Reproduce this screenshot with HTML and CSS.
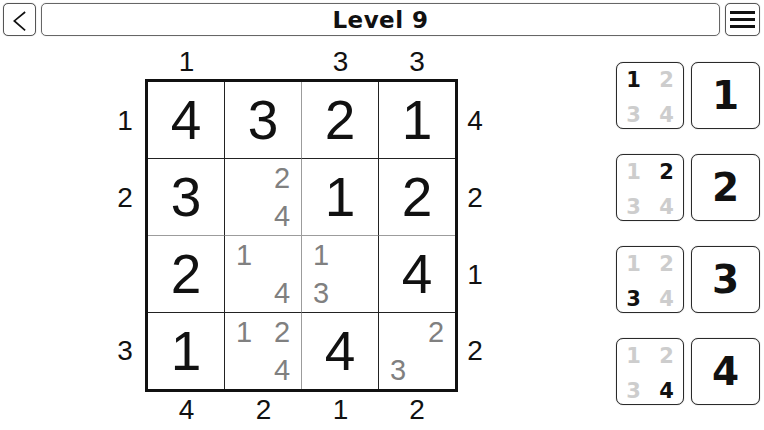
FILE: index.html
```html
<!DOCTYPE html>
<html lang="en">
<head>
<meta charset="utf-8">
<title>Level 9</title>
<link rel="stylesheet" href="styles.css">
</head>
<body>
<header class="topbar">
  <button class="tb-btn back" aria-label="Back">
    <svg width="33" height="33" viewBox="0 0 33 33"><path d="M22.5 8.5 L11 18 L22.5 28" fill="none" stroke="#111" stroke-width="1.8" stroke-linejoin="miter"/></svg>
  </button>
  <div class="title">Level 9</div>
  <button class="tb-btn menu" aria-label="Menu">
    <span class="bar"></span><span class="bar"></span><span class="bar"></span>
  </button>
</header>

<main class="main">
  <section class="board">
    <div class="corner"></div>
    <div class="clues clues-h"><span>1</span><span></span><span>3</span><span>3</span></div>
    <div class="corner"></div>

    <div class="clues clues-v"><span>1</span><span>2</span><span></span><span>3</span></div>
    <div class="grid">
      <div class="cell">4</div>
      <div class="cell">3</div>
      <div class="cell">2</div>
      <div class="cell">1</div>

      <div class="cell">3</div>
      <div class="cell notes"><i></i><i>2</i><i></i><i>4</i></div>
      <div class="cell">1</div>
      <div class="cell">2</div>

      <div class="cell">2</div>
      <div class="cell notes"><i>1</i><i></i><i></i><i>4</i></div>
      <div class="cell notes"><i>1</i><i></i><i>3</i><i></i></div>
      <div class="cell">4</div>

      <div class="cell">1</div>
      <div class="cell notes"><i>1</i><i>2</i><i></i><i>4</i></div>
      <div class="cell">4</div>
      <div class="cell notes"><i></i><i>2</i><i>3</i><i></i></div>
    </div>
    <div class="clues clues-v"><span>4</span><span>2</span><span>1</span><span>2</span></div>

    <div class="corner"></div>
    <div class="clues clues-h"><span>4</span><span>2</span><span>1</span><span>2</span></div>
    <div class="corner"></div>
  </section>

  <section class="keypad">
    <button class="key pencil"><b class="on">1</b><b>2</b><b>3</b><b>4</b></button>
    <button class="key digit">1</button>
    <button class="key pencil"><b>1</b><b class="on">2</b><b>3</b><b>4</b></button>
    <button class="key digit">2</button>
    <button class="key pencil"><b>1</b><b>2</b><b class="on">3</b><b>4</b></button>
    <button class="key digit">3</button>
    <button class="key pencil"><b>1</b><b>2</b><b>3</b><b class="on">4</b></button>
    <button class="key digit">4</button>
  </section>
</main>
</body>
</html>
```

FILE: styles.css
```css
* { box-sizing: border-box; }

html, body {
  margin: 0;
  background: #fff;
  color: #111;
  font-family: "Liberation Sans", Arial, sans-serif;
}

button {
  font: inherit;
  color: inherit;
  background: #fff;
  padding: 0;
  margin: 0;
}

/* ---------- top bar ---------- */
.topbar {
  display: flex;
  gap: 5px;
  padding: 3px 4px 0 3px;
  height: 36px;
}

.tb-btn {
  width: 33px;
  height: 33px;
  border: 1px solid #555;
  border-radius: 5px;
  box-shadow: 0 0 1px #999;
  display: flex;
  align-items: center;
  justify-content: center;
}

.tb-btn.menu {
  width: 35px;
  flex-direction: column;
  gap: 4px;
}

.tb-btn .bar {
  display: block;
  width: 25px;
  height: 3px;
  background: #111;
}

.title {
  flex: 1;
  height: 33px;
  border: 1px solid #666;
  border-radius: 5px;
  box-shadow: 0 0 1px #aaa;
  display: flex;
  align-items: center;
  justify-content: center;
  font-family: "DejaVu Sans", sans-serif;
  font-weight: bold;
  font-size: 23px;
  letter-spacing: 0.5px;
  padding-top: 1px;
}

/* ---------- main area ---------- */
.main {
  display: flex;
  align-items: flex-start;
  padding: 9px 0 0 105px;
}

.board {
  display: grid;
  grid-template-columns: 40px 313px 34px;
  grid-template-rows: 34px 313px 36px;
}

.clues {
  display: grid;
  font-size: 28px;
  line-height: 1;
}

.clues span {
  display: flex;
  align-items: center;
  justify-content: center;
}

.clues-h {
  grid-template-columns: 77px 77px 77px 76px;
  padding: 0 3px;
}

.clues-v {
  grid-template-rows: 77px 77px 77px 76px;
  padding: 3px 0;
}

/* ---------- puzzle grid ---------- */
.grid {
  display: grid;
  grid-template-columns: 77px 77px 77px 76px;
  grid-template-rows: 77px 77px 77px 76px;
  border: 3px solid #111;
}

.cell {
  border-right: 1px solid #222;
  border-bottom: 1px solid #222;
  display: flex;
  align-items: center;
  justify-content: center;
  font-size: 55px;
  line-height: 1;
  color: #111;
}

.cell:nth-child(4n) { border-right: none; }
.cell:nth-child(n+13) { border-bottom: none; }

/* middle lines are drawn lighter */
.cell:nth-child(4n+2) { border-right-color: #9c9c9c; }
.cell:nth-child(n+5):nth-child(-n+8) { border-bottom-color: #9c9c9c; }

.cell.notes {
  display: grid;
  grid-template-columns: 1fr 1fr;
  grid-template-rows: 1fr 1fr;
  align-items: center;
  justify-items: center;
  font-size: 29px;
  color: #808080;
}

.cell.notes i {
  font-style: normal;
}

/* ---------- keypad ---------- */
.keypad {
  margin-left: 124px;
  margin-top: 17px;
  display: grid;
  grid-template-columns: 68px 69px;
  grid-auto-rows: 67px;
  column-gap: 7px;
  row-gap: 25px;
}

.key {
  border: 1px solid #2a2a2a;
  border-radius: 7px;
  box-shadow: 0 0 1px #888;
  font-family: "DejaVu Sans", sans-serif;
  font-weight: bold;
}

.key.digit {
  display: flex;
  align-items: center;
  justify-content: center;
  font-size: 39px;
  line-height: 1;
  color: #111;
}

.key.pencil {
  display: grid;
  grid-template-columns: 1fr 1fr;
  grid-template-rows: 35px 35px;
  align-content: start;
  justify-items: center;
  align-items: center;
  font-size: 21px;
  line-height: 1;
  overflow: hidden;
}

.key.pencil b {
  color: #cdcdcd;
}

.key.pencil b.on {
  color: #111;
}
```
